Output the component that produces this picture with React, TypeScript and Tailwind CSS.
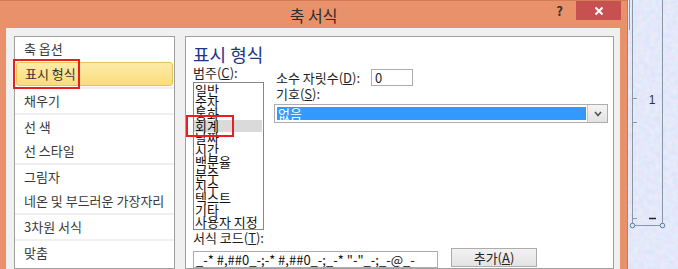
import React from 'react';

const navGroups: { label: string; selected?: boolean }[][] = [
  [{ label: '축 옵션' }, { label: '표시 형식', selected: true }],
  [{ label: '채우기' }],
  [{ label: '선 색' }, { label: '선 스타일' }],
  [{ label: '그림자' }, { label: '네온 및 부드러운 가장자리' }],
  [{ label: '3차원 서식' }],
  [{ label: '맞춤' }],
];

const categories = ['일반', '숫자', '통화', '회계', '날짜', '시간', '백분율', '분수', '지수', '텍스트', '기타', '사용자 지정'];

function TitleBar() {
  return (
    <div className="grid h-[29px] grid-cols-[1fr_auto_1fr] border-t border-[#d27d57]">
      <div />
      <div className="pt-[3px] text-[16px] leading-[22px] text-[#2b2b2b]">축 서식</div>
      <div className="flex items-start justify-end">
        <span className="mr-[13px] mt-[1px] text-[13px] font-bold leading-[18px] text-[#333]">?</span>
        <button className="mr-[6px] flex h-[19px] w-[45px] items-center justify-center bg-[#c75050]">
          <svg width="10" height="10" viewBox="0 0 10 10">
            <path d="M1.5 1.5 L8.5 8.5 M8.5 1.5 L1.5 8.5" stroke="#fff" strokeWidth="2" />
          </svg>
        </button>
      </div>
    </div>
  );
}

function LeftNav() {
  return (
    <div className="relative w-[161px] shrink-0 border border-[#a0a0a0] bg-white">
      {navGroups.map((group, gi) => (
        <div key={gi}>
          {gi > 0 && <div className="h-[2px] bg-[#eef0f3]" />}
          {group.map((item) =>
            item.selected ? (
              <div
                key={item.label}
                className="m-px flex h-[24px] items-center rounded-[3px] border border-[#e3c35e] bg-gradient-to-b from-[#fdeba8] to-[#fbdc7c] pl-[8px] text-[#333]"
              >
                {item.label}
              </div>
            ) : (
              <div key={item.label} className="flex h-[24px] items-center whitespace-nowrap pl-[9px] text-[#3a3a3a]">
                {item.label}
              </div>
            )
          )}
        </div>
      ))}
      {/* annotation box */}
      <div className="absolute left-[-2px] top-[22px] h-[30px] w-[67px] border-2 border-[#ee1c1c]" />
    </div>
  );
}

function FormatPanel() {
  return (
    <div className="relative w-[429px] shrink-0 border border-[#a0a0a0] bg-white pl-[7px] pt-[7px]">
      <div className="text-[18px] leading-[20px] text-[#1c3688]">표시 형식</div>
      <div className="flex">
        <div className="w-[71px]">
          <div className="mt-px h-[16px] whitespace-nowrap leading-[16px]">
            범주(<u>C</u>):
          </div>
          <div className="mt-px h-[148px] border border-[#828790] pt-px">
            {categories.map((c) => (
              <div
                key={c}
                className={`mr-px h-[12px] whitespace-nowrap pl-px leading-[12px] text-[#111] ${c === '회계' ? 'bg-[#dadada]' : ''}`}
              >
                {c}
              </div>
            ))}
          </div>
        </div>
        <div className="ml-[10px] flex-1 pr-[5px]">
          <div className="mt-[5px] flex h-[17px] items-center">
            <span className="w-[97px] whitespace-nowrap pl-[2px] leading-[16px]">
              소수 자릿수(<u>D</u>):
            </span>
            <div className="flex h-[17px] w-[42px] items-center border border-[#abadb3] pl-[3px] leading-[14px]">0</div>
          </div>
          <div className="h-[16px] pl-[2px] leading-[16px]">
            기호(<u>S</u>):
          </div>
          <div className="mt-[2px] flex h-[19px] border border-[#abadb3]">
            <div className="my-[2px] ml-[2px] mr-px flex flex-1 items-center bg-[#3399ff] pl-px leading-[13px] text-white">없음</div>
            <div className="flex w-[20px] items-center justify-center border-l border-[#c8c8c8] bg-gradient-to-b from-[#f4f4f4] to-[#e2e2e2]">
              <svg width="8" height="6" viewBox="0 0 8 6">
                <path d="M1 1 L4 4.5 L7 1" stroke="#555" strokeWidth="1.6" fill="none" />
              </svg>
            </div>
          </div>
        </div>
      </div>
      <div className="h-[16px] whitespace-nowrap leading-[16px]">
        서식 코드(<u>T</u>):
      </div>
      <div className="flex items-start">
        <div className="mt-[5px] flex h-[17px] w-[245px] items-center overflow-hidden whitespace-nowrap border border-[#abadb3] pl-[2px] leading-[14px] text-[#111]">
          _-* #,##0_-;-* #,##0_-;_-* "-"_-;_-@_-
        </div>
        <button className="ml-[13px] mt-[2px] flex h-[19px] w-[86px] items-center justify-center border border-[#acacac] bg-gradient-to-b from-[#f2f2f2] to-[#e3e3e3] leading-[14px] text-[#222]">
          추가(<u>A</u>)
        </button>
      </div>
      {/* annotation box */}
      <div className="absolute left-[0px] top-[78px] h-[22px] w-[48px] border-2 border-[#ee1c1c]" />
    </div>
  );
}

function Backdrop() {
  return (
    <div className="flex-1 border-l border-[#b08070]">
      <svg width="51" height="269" viewBox="0 0 51 269">
        <defs>
          <filter id="grain" x="0" y="0" width="100%" height="100%">
            <feTurbulence type="fractalNoise" baseFrequency="0.18" numOctaves="3" seed="4" />
            <feColorMatrix
              type="matrix"
              values="0.22 0 0 0 0.66  0 0.16 0 0 0.73  0 0 0.1 0 0.9  0 0 0 0 1"
            />
          </filter>
        </defs>
        <rect width="51" height="269" filter="url(#grain)" />
        <g stroke="#8996a6" strokeWidth="1" fill="none">
          <line x1="1.5" y1="0" x2="1.5" y2="30" />
          <line x1="4.5" y1="0" x2="4.5" y2="225" />
          <line x1="34.5" y1="0" x2="34.5" y2="225" />
          <line x1="4.5" y1="225.5" x2="34.5" y2="225.5" />
          <line x1="4.5" y1="98.5" x2="9" y2="98.5" />
          <line x1="4.5" y1="122.5" x2="9" y2="122.5" />
          <line x1="4.5" y1="218.5" x2="9" y2="218.5" />
          <circle cx="4.5" cy="225.5" r="2.3" stroke="#5f7f9f" fill="#dde6f5" />
          <circle cx="34.5" cy="225.5" r="2.3" stroke="#5f7f9f" fill="#dde6f5" />
        </g>
        <text x="24" y="104" fontSize="12" fill="#333" textAnchor="middle" fontFamily="Liberation Sans, sans-serif">
          1
        </text>
        <line x1="21" y1="218.5" x2="28" y2="218.5" stroke="#222" strokeWidth="1.5" />
      </svg>
    </div>
  );
}

export default function App() {
  return (
    <div className="flex h-[269px] w-[678px] overflow-hidden bg-[#cdd8f2] font-['Noto_Sans_CJK_KR',sans-serif] text-[13px] text-[#1e1e1e]">
      <div className="flex w-[627px] shrink-0 flex-col bg-[#e9916b]">
        <TitleBar />
        <div className="ml-[6px] mr-[7px] flex flex-1 gap-[10px] bg-[#f0f0f0] pl-[8px] pr-[6px] pt-[8px]">
          <LeftNav />
          <FormatPanel />
        </div>
      </div>
      <Backdrop />
    </div>
  );
}
